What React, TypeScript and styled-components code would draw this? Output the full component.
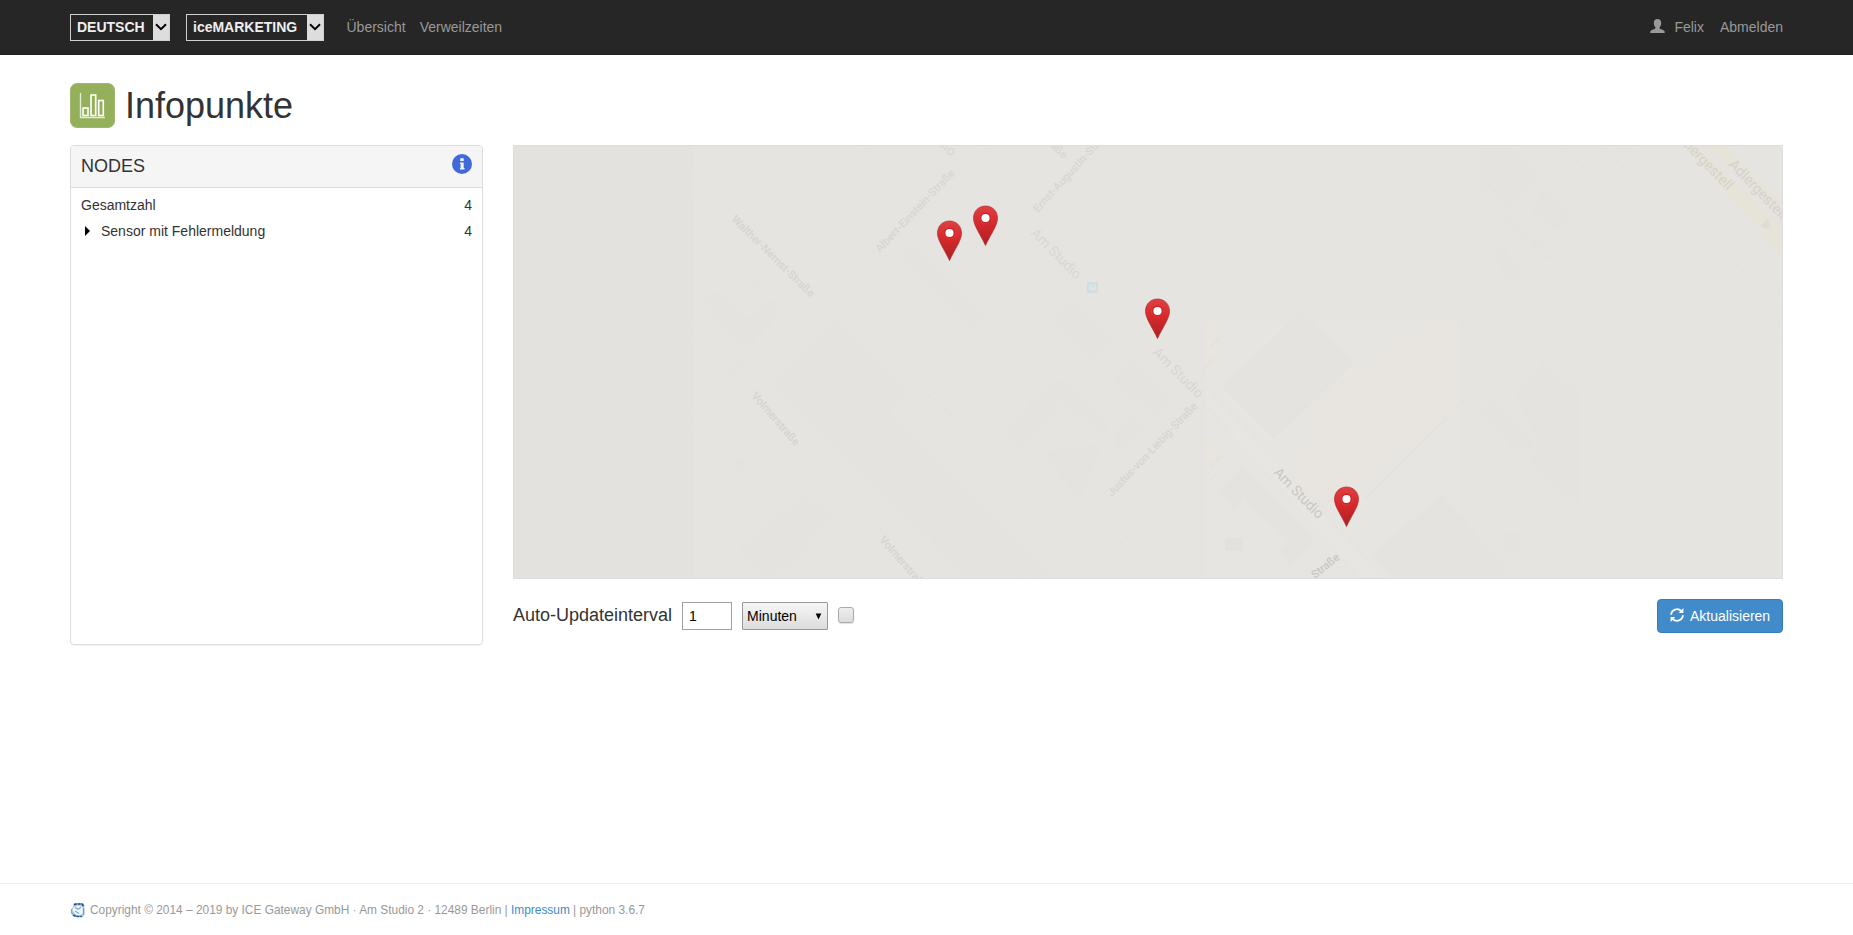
import React from "react";
import styled, { createGlobalStyle } from "styled-components";

const Global = createGlobalStyle`
  *, *::before, *::after { box-sizing: border-box; }
  body {
    margin: 0;
    background: #fff;
    color: #333;
    font: 14px/20px "Liberation Sans", Arial, sans-serif;
  }
`;

const Page = styled.div`
  min-height: 935px;
  display: flex;
  flex-direction: column;
`;

const Navbar = styled.nav`
  height: 55px;
  padding: 0 70px;
  background: #262626;
  border-bottom: 1px solid #1e1e1e;
  display: flex;
  align-items: center;
  color: #999;
`;

const Picker = styled.div<{ $width: number }>`
  display: flex;
  width: ${(p) => p.$width}px;
  height: 27px;
  margin-right: 16px;
  border: 1px solid #d0d0d0;
  color: #eee;
  font-weight: bold;
`;

const PickerLabel = styled.span`
  flex: 1;
  padding-left: 6px;
  line-height: 25px;
  white-space: nowrap;
`;

const PickerArrow = styled.span`
  width: 16px;
  background: #ddd;
  display: flex;
  align-items: center;
  justify-content: center;
`;

const NavLinks = styled.div<{ $gap: number; $left?: string }>`
  display: flex;
  align-items: center;
  gap: ${(p) => p.$gap}px;
  margin-left: ${(p) => p.$left ?? "0"};
`;

const NavLink = styled.a`
  display: flex;
  align-items: center;
  gap: 9px;
  svg { margin-bottom: 2px; }
`;

const Main = styled.main`
  flex: 1;
  padding: 28px 70px 0;
`;

const Heading = styled.header`
  display: flex;
  align-items: center;
  gap: 10px;
  height: 45px;
  margin-bottom: 17px;
`;

const Title = styled.h1`
  margin: 0;
  font-size: 36px;
  line-height: 40px;
  font-weight: normal;
`;

const Columns = styled.div`
  display: flex;
  gap: 30px;
`;

const Panel = styled.section`
  width: 413px;
  height: 500px;
  border: 1px solid #ddd;
  border-radius: 4px;
  box-shadow: 0 1px 1px rgba(0, 0, 0, 0.05);
`;

const PanelHead = styled.div`
  height: 42px;
  padding: 0 10px 2px;
  background: #f5f5f5;
  border-bottom: 1px solid #ddd;
  border-radius: 3px 3px 0 0;
  display: flex;
  align-items: center;
  justify-content: space-between;
`;

const PanelTitle = styled.h2`
  margin: 0;
  font-size: 18px;
  line-height: 20px;
  font-weight: normal;
`;

const InfoIcon = styled.svg`
  margin-bottom: 4px;
`;

const NodeList = styled.div`
  padding: 4px 10px;
`;

const NodeRow = styled.div`
  display: flex;
  align-items: center;
  height: 26px;
`;

const Caret = styled.span`
  width: 0;
  border: 5px solid transparent;
  border-left-color: #000;
  border-right-width: 0;
  margin: 0 11px 0 4px;
`;

const Count = styled.span`
  margin-left: auto;
`;

const Content = styled.div`
  flex: 1;
`;

const MapFrame = styled.div`
  height: 434px;
  border: 1px solid #ddd;
  overflow: hidden;
  svg { display: block; }
`;

const Controls = styled.div`
  display: flex;
  align-items: center;
  height: 34px;
  margin-top: 20px;
`;

const IntervalLabel = styled.label`
  font-size: 18px;
  margin-right: 10px;
  padding-bottom: 2px;
`;

const IntervalInput = styled.input`
  width: 50px;
  height: 28px;
  margin: 0 10px 0 0;
  padding: 1px 6px;
  border: 1px solid #a0a0a0;
  background: #fff;
  color: #000;
  font: inherit;
`;

const UnitSelect = styled.div`
  width: 86px;
  height: 28px;
  margin-right: 10px;
  padding: 0 5px 0 4px;
  border: 1px solid #999;
  border-radius: 1px;
  background: linear-gradient(#f6f6f6, #dcdcdc);
  color: #000;
  display: flex;
  align-items: center;
  justify-content: space-between;
`;

const Checkbox = styled.span`
  width: 16px;
  height: 16px;
  margin-bottom: 2px;
  border: 1px solid #aaa;
  border-radius: 3px;
  background: linear-gradient(#eee, #dcdcdc);
  box-shadow: 0 1px 1px rgba(0, 0, 0, 0.12);
`;

const RefreshButton = styled.button`
  display: flex;
  align-items: center;
  gap: 6px;
  width: 126px;
  height: 34px;
  margin-left: auto;
  padding: 0 12px;
  border: 1px solid #357ebd;
  border-radius: 4px;
  background: #428bca;
  color: #fff;
  font: inherit;
  white-space: nowrap;
  svg { flex: none; margin-bottom: 2px; }
`;

const Footer = styled.footer`
  height: 52px;
  padding: 0 70px;
  border-top: 1px solid #eee;
  display: flex;
  align-items: center;
  gap: 5px;
  color: #999;
  font-size: 11.9px;
`;

const FooterLink = styled.a`
  color: #428bca;
`;

const Chevron = () => (
  <svg width="12" height="8" viewBox="0 0 12 8">
    <path d="M1 1.2 6 6.2 11 1.2" fill="none" stroke="#000" strokeWidth="2" />
  </svg>
);

const UserIcon = () => (
  <svg width="15" height="14" viewBox="0 0 15 14">
    <path
      fill="#999"
      d="M7.5 0c2.3 0 3.7 1.500 3.700 3.900 0 2-.7 3.300-1.500 4.200-.3.400-.2 1.500.3 1.700l3.600 1.500c.9.400 1.200 1.200 1.200 2.700H.2c0-1.500.3-2.300 1.200-2.700L5 9.800c.5-.2.600-1.300.3-1.700-.8-.9-1.500-2.200-1.500-4.200C3.800 1.500 5.200 0 7.500 0z"
    />
  </svg>
);

const RefreshIcon = () => (
  <svg width="14" height="14" viewBox="0 0 14 14" fill="none" stroke="#fff" strokeWidth="1.900">
    <path d="M1.100 6.700A5.900 5.900 0 0 1 11.200 3M12.900 7.300A5.900 5.900 0 0 1 2.800 11" />
    <path d="M13.400 0v5H8.700zM.6 14V9h4.700z" fill="#fff" stroke="none" />
  </svg>
);

const ChartIcon = () => (
  <svg width="45" height="45" viewBox="0 0 45 45">
    <rect x=".5" y=".5" width="44" height="44" rx="6.500" fill="#94b05a" stroke="#9fb96b" />
    <path d="M10.500 10v24.500H35" fill="none" stroke="#e3ebd4" strokeWidth="1.400" />
    <g fill="none" stroke="#fff" strokeWidth="1.600">
      <rect x="13" y="25" width="5" height="7.500" />
      <rect x="21" y="12" width="4.700" height="20.500" />
      <rect x="28.700" y="17.500" width="4.600" height="15" />
    </g>
  </svg>
);

const LogoIcon = () => (
  <svg width="15" height="16" viewBox="0 0 15 16">
    <path d="M4 1h9l1.500 2v9L13 15H5l-3-2-1-5 2-3z" fill="#a9cbe6" />
    <path d="M4 5 9 3.500l4 2v6L9 13.500 5 12 2.500 8z" fill="#f1f8fc" />
    <path d="M4 2.800 6 2h6l1.500 2M3 13l3 1.500h6" fill="none" stroke="#1f4f80" strokeWidth="1.700" strokeDasharray="3 .8" />
    <path d="M13.500 6v7" stroke="#6d9fca" strokeWidth="1.300" />
    <path d="M1.500 7v4l3 2M5 5.500l3 1.800 3-2M5 9l4 2.500" fill="none" stroke="#77a8d0" strokeWidth="1.100" />
  </svg>
);

const pins = [
  [949.5, 220.5],
  [985.5, 205.5],
  [1157.5, 298.5],
  [1346.5, 486.5],
];

const buildings = [
  "M703 302l14-11 30 28 25-20 10 13-37 36z",
  "M773 386l63-66 70 70-18 20 168 168H970L820 430l-16-15z",
  "M900 257l15-13 68 73-10 12z",
  "M1053 322l20-22 42 40-20 20z",
  "M1113 378l18-18 40 38-17 18z",
  "M1002 432l44-46 18-6 47 44-10 11-38-35-42 48z",
  "M1041 454l60-11-20 56z",
  "M1114 435l20-19 13 13-25 25-8-9z",
  "M980 500l48 50-13 16-35-30z",
  "M1223 387l77-75 54 50-80 76z",
  "M1220 490l22-23 72 73-24 24-12-12 10-12-44-42-10 12z",
  "M1372 556l70-62 62 73-10 11H1394z",
  "M1515 397l28-36 36 33v110l-50-40 10-22z",
  "M1480 413l15-12 40 42-16 12z",
  "M1530 210l14-20 26 28-16 12z",
  "M1493 258l10-11 21 25-12 10z",
  "M1480 146h32l32 30-33 30-31-24z",
  "M740 548l65-53 27 23-27 25 5 7-23 20-8-4-12 12z",
  "M750 280l6-4 6 8-5 5zM735 463l7-5 6 8-6 6zM1505 532h15v18h-15z",
];

const labels: [string, number, number, number, number, string][] = [
  ["Walther-Nernst-Straße", 731, 220, 44.500, 11, "#d5d4d0"],
  ["Albert-Einstein-Straße", 880, 253, -46.500, 11, "#d7d6d2"],
  ["Ernst-Augustin-Straße", 1038, 213, -47.500, 11, "#d7d6d2"],
  ["Am Studio", 1030, 234, 45, 14, "#d8d7d3"],
  ["Am Studio", 905, 111, 45, 14, "#d7d6d2"],
  ["Am Studio", 1152, 353, 45, 14, "#d7d6d2"],
  ["Am Studio", 1273, 473, 46, 14, "#c8c7c3"],
  ["Volmerstraße", 751, 396, 49, 11, "#d5d4d0"],
  ["Volmerstraße", 879, 540, 49, 11, "#d5d4d0"],
  ["Straße", 1040, 136, 45, 11, "#d8d7d3"],
  ["Justus-von-Liebig-Straße", 1112, 497, -46.500, 11, "#d6d5d1"],
  ["Straße", 1315, 579, -39, 11, "#c8c7c3"],
  ["Adlergestell", 1674, 136, 46, 14.500, "#d5d2cb"],
  ["Adlergestell", 1728, 165, 46, 14.500, "#d3d2cd"],
];

const SiteMap = () => (
  <svg
    width="1268"
    height="432"
    viewBox="514 146 1268 432"
    fontFamily="Roboto, sans-serif"
    fontWeight="500"
  >
    <defs>
      <linearGradient id="pinFill" x1="0" y1="0" x2="0" y2="1">
        <stop offset="0" stopColor="#e04043" />
        <stop offset=".5" stopColor="#d3272b" />
        <stop offset="1" stopColor="#a92125" />
      </linearGradient>
    </defs>
    <rect x="514" y="146" width="1268" height="432" fill="#e5e4e0" />
    <rect x="514" y="146" width="179" height="432" fill="#e3e2de" />
    <rect x="1205" y="322" width="256" height="256" fill="#e6e5e1" />
    <path d="M1205 322h10v40l-10 10zM1205 440h15l-3 18-12 8z" fill="#e8e4de" />
    <path d="M1461 322h-35l-115 82-13 90 32 8 131-98z" fill="#e8e4df" />
    <g fill="#e4e3df">
      {buildings.map((d) => <path key={d} d={d} />)}
    </g>
    <path d="M1225 538h17v13h-17z" fill="#e2e1dd" />
    <g fill="none" stroke="#e2e1dd" strokeWidth=".8">
      <path d="M693 174l130 124-130 130M693 190l114 110-114 113M693 320l56 55M693 335l45 44M750 386l114 143M760 380l125 155M835 300l110 111q18 8 35 10l105 90M830 307l150 135 100 76" />
      <path d="M823 298L990 146M832 306L925 219M778 230L870 146M956 170l40 45M1028 212l40-38M1080 170l48 50q22 14 38-2l8-26 35-35M1090 168l50 42 15-4M1060 230l140 120M700 290l45-40M970 395l23-24M1037 308l20-23M1135 298l20-20" />
      <path d="M1084 511l25-22M1020 578l94-82M1035 578l77-77M1110 555l90-95M1015 565l14-14M1480 184l70 76M1480 194l70 65q5-1 0-7L1480 176M1560 146l50 45 50 35M1604 146l175 194M1615 146l167 178M1627 146l155 167M1744 268l38 23M1550 320l-95 88M1205 485l37-40" />
      <path d="M1223 387l51 51 80-76M1235 501l8-8M1249 520l11-11M1290 564l24-24M745 348l37-36M888 410l18-20" />
    </g>
    <path d="M1205 387v17l155 174h24l-159-171z" fill="#e7e6e2" stroke="#e3e2de" strokeWidth=".7" />
    <path d="M1205 482l38-38" stroke="#e9e8e4" strokeWidth="1.500" />
    <path d="M1210 348l10-11M1203 370l12-13M1210 468l14-14M1364 500l83-82M1328 502l4-4" stroke="#e8dcd2" />
    <path d="M1684 146h43l55 57v53z" fill="#e6e3d9" />
    <path d="M1704 146l78 80" stroke="#e4e3e0" strokeWidth="5" />
    <path d="M1760 226l8-8 1 5 2 5-5 1z" fill="#dfdcd3" />
    {labels.map(([text, x, y, angle, size, color], i) => (
      <text key={i} transform={`translate(${x} ${y}) rotate(${angle})`} fontSize={size} fill={color} fontWeight={size > 12 ? 400 : 500}>
        {text}
      </text>
    ))}
    <g>
      <rect x="1087" y="282" width="11" height="11" rx="1.500" fill="#cfdee1" />
      <path d="M1089 284.500h7v6h-7z" fill="#e5e4e0" />
      <path d="M1090 285.500h5v2h-5zM1090 289h1v1h-1zM1094 289h1v1h-1z" fill="#cfdee1" />
    </g>
    {pins.map(([x, y]) => (
      <g key={x} transform={`translate(${x} ${y})`}>
        <path
          d="M0 .5C7 .5 12 5.700 12 12.700 12 20 5 29 0 40-5 29-12 20-12 12.700-12 5.700-7 .5 0 .5z"
          fill="url(#pinFill)"
          stroke="#b8292d"
          strokeWidth=".7"
        />
        <circle cy="12.500" r="6" fill="#cb2529" stroke="#df3b3e" strokeWidth=".8" />
        <circle cy="12.500" r="4.100" fill="#fff" />
      </g>
    ))}
  </svg>
);

export default function App() {
  return (
    <Page>
      <Global />
      <Navbar>
        <Picker $width={100}>
          <PickerLabel>DEUTSCH</PickerLabel>
          <PickerArrow><Chevron /></PickerArrow>
        </Picker>
        <Picker $width={138}>
          <PickerLabel>iceMARKETING</PickerLabel>
          <PickerArrow><Chevron /></PickerArrow>
        </Picker>
        <NavLinks $gap={14} $left="6.5px">
          <NavLink>Übersicht</NavLink>
          <NavLink>Verweilzeiten</NavLink>
        </NavLinks>
        <NavLinks $gap={16} $left="auto">
          <NavLink><UserIcon />Felix</NavLink>
          <NavLink>Abmelden</NavLink>
        </NavLinks>
      </Navbar>
      <Main>
        <Heading>
          <ChartIcon />
          <Title>Infopunkte</Title>
        </Heading>
        <Columns>
          <Panel>
            <PanelHead>
              <PanelTitle>NODES</PanelTitle>
              <InfoIcon width="20" height="20" viewBox="0 0 20 20">
                <circle cx="10" cy="10" r="10" fill="#4169dc" />
                <path d="M8.300 4.300h3.400v2.800H8.300zM8 8.500h3.700v5.500h.8v1.500H8V14h.6v-4H8z" fill="#f3f3f3" />
              </InfoIcon>
            </PanelHead>
            <NodeList>
              <NodeRow>Gesamtzahl<Count>4</Count></NodeRow>
              <NodeRow><Caret />Sensor mit Fehlermeldung<Count>4</Count></NodeRow>
            </NodeList>
          </Panel>
          <Content>
            <MapFrame><SiteMap /></MapFrame>
            <Controls>
              <IntervalLabel htmlFor="interval">Auto-Updateinterval</IntervalLabel>
              <IntervalInput id="interval" defaultValue="1" />
              <UnitSelect>
                Minuten
                <svg width="7" height="7" viewBox="0 0 8 7"><path d="M.8 0h6.400L4 7z" fill="#000" /></svg>
              </UnitSelect>
              <Checkbox />
              <RefreshButton><RefreshIcon />Aktualisieren</RefreshButton>
            </Controls>
          </Content>
        </Columns>
      </Main>
      <Footer>
        <LogoIcon />
        <span>
          Copyright © 2014 – 2019 by ICE Gateway GmbH · Am Studio 2 · 12489 Berlin |{" "}
          <FooterLink>Impressum</FooterLink> | python 3.6.7
        </span>
      </Footer>
    </Page>
  );
}
